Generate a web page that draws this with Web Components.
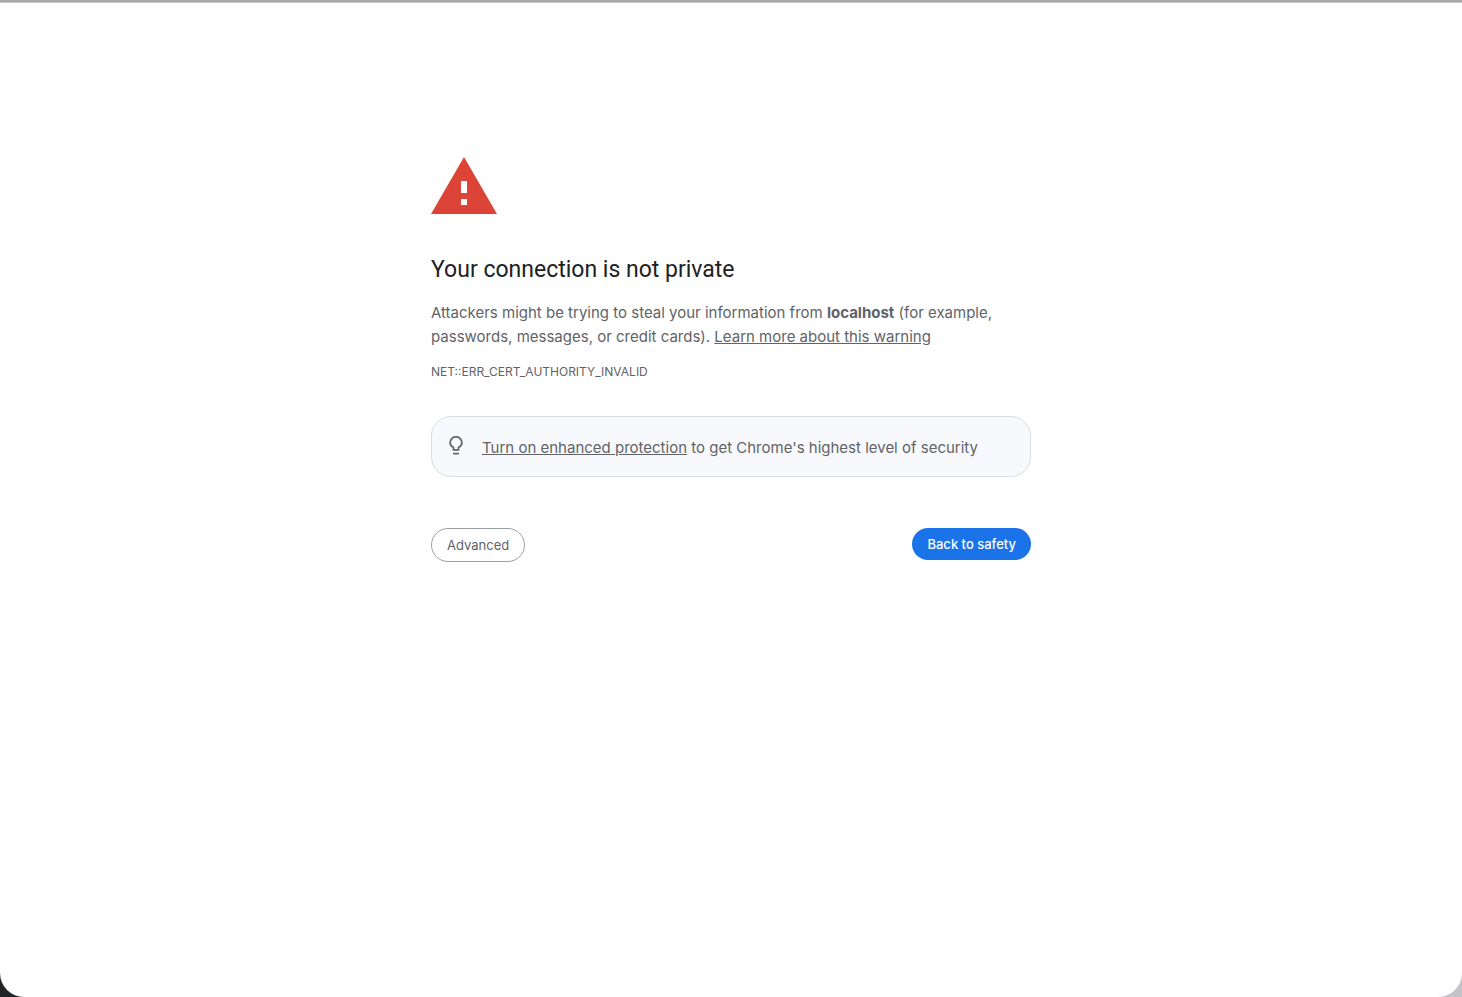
<!DOCTYPE html>
<html lang="en">
<head>
<meta charset="utf-8">
<meta name="viewport" content="width=device-width, initial-scale=1">
<title>Privacy error</title>
<style>
body{margin:0;font-family:Inter,sans-serif;font-size:15px;line-height:24px;color:#5f6368}
</style>
</head>
<body>
<browser-window>
  <privacy-warning>
    <warning-icon slot="icon"></warning-icon>
    <span slot="title">Your connection is not private</span>
    <tip-box slot="tip"></tip-box>
    <pill-button slot="actions">Advanced</pill-button>
    <pill-button slot="actions" primary>Back to safety</pill-button>
  </privacy-warning>
</browser-window>
<script>
const define = (name, html) => customElements.define(name, class extends HTMLElement {
  constructor() {
    super();
    this.attachShadow({mode: 'open'}).innerHTML = html;
  }
});

define('browser-window', `
<style>
:host{display:block;background:linear-gradient(90deg,#222326 50%,#c4c4c8 50%)}
main{box-sizing:border-box;min-height:100vh;background:#fff;border-radius:0 0 24px 24px;overflow:hidden}
.edge{height:3px;background:linear-gradient(#a9a9a9 67%,#c4c4c4 67%)}
</style>
<main><div class="edge"></div><slot></slot></main>`);

define('warning-icon', `
<style>:host{display:block}svg{display:block}</style>
<svg width="66" height="57" viewBox="0 0 66 57" role="img" aria-label="Warning">
<path fill="#db4437" d="M33 0 66 57H0z"/><path fill="#fff" d="M30 24h6v12h-6zM30 42h6v6h-6z"/></svg>`);

define('tip-box', `
<style>
:host{display:flex;align-items:flex-start;gap:16px;box-sizing:border-box;padding:19px 14px 16px;background:#f8f9fc;border:1px solid #dadce0;border-radius:20px}
svg{flex:none;display:block}
p{margin:0}
a{color:inherit}
</style>
<svg width="20" height="20" viewBox="0 0 20 20" fill="none" stroke="#5f6368" aria-hidden="true">
<path stroke-width="1.7" d="M7.500 13.800v-2.300C5.400 10.400 4.100 8.800 4.100 6.700a5.900 5.900 0 0 1 11.800 0c0 2.100-1.300 3.700-3.400 4.800v2.300z"/>
<path stroke-width="1.700" d="M7 17.600h6"/></svg>
<p><a href="#protection">Turn on enhanced protection</a> to get Chrome's highest level of security</p>`);

define('pill-button', `
<style>
:host{display:block}
button{display:block;box-sizing:border-box;margin:0;height:34px;padding:0 15px;border:1px solid #9aa0a6;border-radius:17px;background:#fff;color:#5f6368;font:13px/20px Inter,sans-serif;cursor:pointer}
:host([primary]) button{height:32px;border:0;background:#1a73e8;color:#fff;font-weight:500}
</style>
<button type="button"><slot></slot></button>`);

define('privacy-warning', `
<style>
:host{display:block;box-sizing:border-box;max-width:600px;margin:0 auto;padding:154px 0 40px}
h1{margin:40px 0 15px;font:400 23px/32px Roboto,sans-serif;color:#202124}
p{margin:0}
.code{margin-top:13px;font-size:12px;line-height:20px}
a{color:inherit}
.tip{margin-top:34px}
.actions{display:flex;justify-content:space-between;align-items:flex-start;margin-top:51px}
</style>
<slot name="icon"></slot>
<h1><slot name="title"></slot></h1>
<p>Attackers might be trying to steal your information from <strong>localhost</strong> (for example, passwords, messages, or credit cards). <a href="#learn-more">Learn more about this warning</a></p>
<p class="code">NET::ERR_CERT_AUTHORITY_INVALID</p>
<div class="tip"><slot name="tip"></slot></div>
<div class="actions"><slot name="actions"></slot></div>`);
</script>
</body>
</html>
